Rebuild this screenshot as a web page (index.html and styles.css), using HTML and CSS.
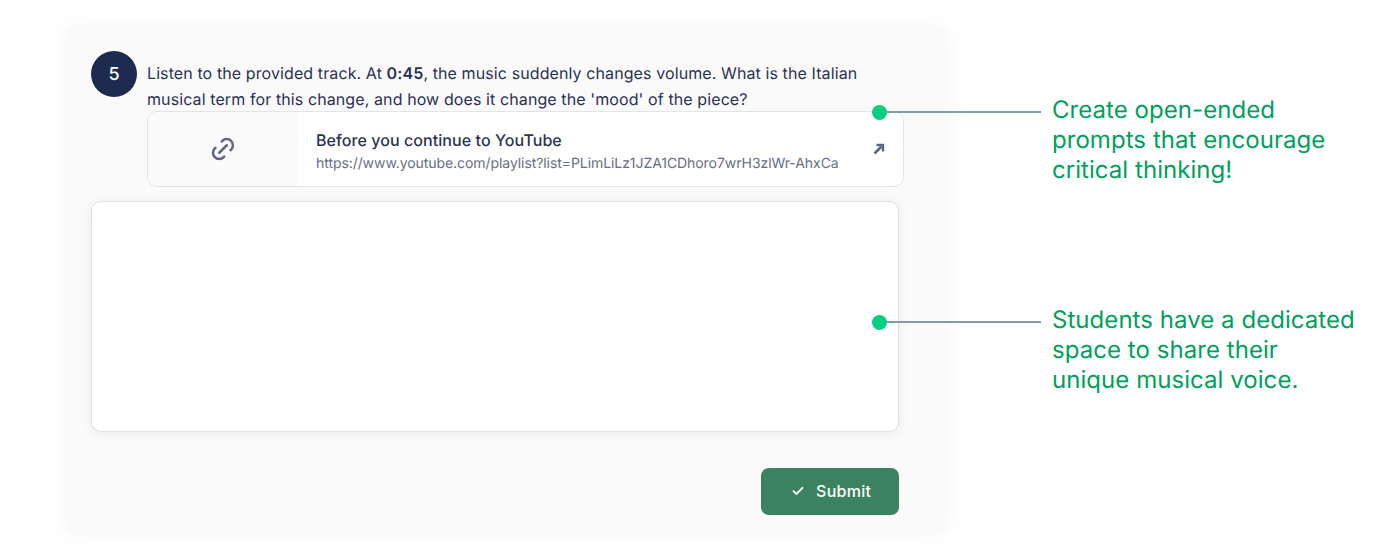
FILE: index.html
```html
<!DOCTYPE html>
<html lang="en">
<head>
    <meta charset="utf-8">
    <title>Open-ended question</title>
    <link rel="stylesheet" href="styles.css">
</head>
<body>
    <div class="stage">
        <!-- Question card -->
        <div class="card">
            <div class="question">
                <div class="number">5</div>
                <div class="question-body">
                    <p class="prompt">Listen to the provided track. At <strong>0:45</strong>, the music suddenly changes volume. What is the Italian musical term for this change, and how does it change the 'mood' of the piece?</p>
                    <a class="link-card">
                        <div class="link-thumb">
                            <svg width="30" height="30" viewBox="0 0 24 24" fill="none" stroke="#5f6682" stroke-width="2" stroke-linecap="round" stroke-linejoin="round">
                                <path d="M9 15l6-6"/>
                                <path d="M11 6l.46-.54a5 5 0 0 1 7.07 7.07l-.53.47"/>
                                <path d="M13 18l-.4.53a5.07 5.07 0 0 1-7.12 0 4.97 4.97 0 0 1 0-7.07l.52-.46"/>
                            </svg>
                        </div>
                        <div class="link-text">
                            <div class="link-title">Before you continue to YouTube</div>
                            <div class="link-url">https://www.youtube.com/playlist?list=PLimLiLz1JZA1CDhoro7wrH3zlWr-AhxCa</div>
                        </div>
                        <svg class="link-arrow" width="12" height="12" viewBox="0 0 12 12" fill="none" stroke="#5f6682">
                            <path d="M1.5 10.5 8.5 3.5" stroke-width="2.6"/>
                            <path d="M3.5 2h6.5v6.5" stroke-width="2.4"/>
                        </svg>
                    </a>
                </div>
            </div>
            <div class="answer"></div>
            <div class="actions">
                <button class="submit">
                    <svg width="12" height="10" viewBox="0 0 12 10" fill="none" stroke="#ffffff" stroke-width="1.8" stroke-linecap="round" stroke-linejoin="round">
                        <path d="M1.5 5.2 4.4 8 10.5 1.8"/>
                    </svg>
                    <span class="submit-label">Submit</span>
                </button>
            </div>
        </div>

        <!-- Callouts -->
        <div class="callout callout-prompt">
            <span class="dot"></span>
            <span class="line"></span>
            <p class="note">Create open-ended<br>prompts that encourage<br>critical thinking!</p>
        </div>
        <div class="callout callout-answer">
            <span class="dot"></span>
            <span class="line"></span>
            <p class="note">Students have a dedicated<br>space to share their<br>unique musical voice.</p>
        </div>
    </div>
</body>
</html>
```
FILE: styles.css
```css
/* General Styles */
body {
    font-family: Inter, "Liberation Sans", sans-serif;
    text-rendering: geometricPrecision;
    margin: 0;
    background-color: #ffffff;
    color: #2a3153;
}

.stage {
    position: relative;
    width: 1400px;
    height: 560px;
    padding: 26px 0 0 66px;
    box-sizing: border-box;
    overflow: hidden;
}

.card {
    width: 882px;
    height: 508px;
    padding: 25px 25px 19px;
    box-sizing: border-box;
    background-color: #fafafb;
    border-radius: 8px;
    box-shadow: 0 0 24px rgba(30, 35, 70, 0.04);
    display: flex;
    flex-direction: column;
}

/* Question */
.question {
    display: flex;
    flex: none;
    gap: 10px;
}

.number {
    flex: none;
    width: 46px;
    height: 46px;
    border-radius: 50%;
    background-color: #1c2a50;
    color: #ffffff;
    font-size: 18px;
    font-weight: 500;
    display: flex;
    align-items: center;
    justify-content: center;
}

.question-body {
    width: 757px;
    margin-top: 9px;
}

.prompt {
    margin: 0;
    width: 730px;
    font-size: 16px;
    line-height: 26px;
    letter-spacing: 0.1px;
}

.prompt strong {
    font-weight: 600;
}

/* Link preview */
.link-card {
    display: flex;
    align-items: center;
    height: 76px;
    box-sizing: border-box;
    margin-top: -1px;
    background-color: #ffffff;
    border: 1px solid #e3e3ee;
    border-radius: 10px;
    overflow: hidden;
}

.link-thumb {
    flex: none;
    width: 150px;
    height: 100%;
    background-color: #fafafb;
    display: flex;
    align-items: center;
    justify-content: center;
}

.link-text {
    flex: 1;
    padding: 5px 0 0 18px;
}

.link-title {
    font-size: 16px;
    font-weight: 500;
    line-height: 22px;
    letter-spacing: 0.07px;
    margin-bottom: 2px;
}

.link-url {
    font-size: 14px;
    line-height: 22px;
    letter-spacing: -0.07px;
    color: #686d85;
}

.link-arrow {
    margin-right: 18px;
}

/* Answer box */
.answer {
    flex: none;
    width: 808px;
    height: 231px;
    box-sizing: border-box;
    margin-top: 14px;
    background-color: #ffffff;
    border: 1px solid #e0e0ea;
    border-radius: 10px;
    box-shadow: 0 1px 12px rgba(30, 35, 70, 0.07);
}

.actions {
    width: 808px;
    margin-top: 36px;
    display: flex;
    justify-content: flex-end;
}

.submit {
    width: 138px;
    height: 47px;
    padding: 0 0 1px 31px;
    display: flex;
    align-items: center;
    gap: 12px;
    background-color: #3b8260;
    color: #ffffff;
    border: none;
    border-radius: 8px;
    font-family: inherit;
    font-size: 16px;
    font-weight: 500;
    letter-spacing: 0.3px;
}

/* Callouts */
.callout {
    position: absolute;
    left: 872px;
}

.callout-prompt {
    top: 105px;
}

.callout-answer {
    top: 315px;
}

.dot {
    position: absolute;
    left: 0;
    top: 0;
    width: 15px;
    height: 15px;
    border-radius: 50%;
    background-color: #00d080;
}

.line {
    position: absolute;
    left: 14px;
    top: 6px;
    width: 155px;
    height: 2px;
    background-color: #7d9f9f;
}

.note {
    position: absolute;
    left: 180px;
    top: -10px;
    margin: 0;
    white-space: nowrap;
    font-size: 24px;
    line-height: 30px;
    letter-spacing: 0.05px;
    color: #00a05c;
}
```
